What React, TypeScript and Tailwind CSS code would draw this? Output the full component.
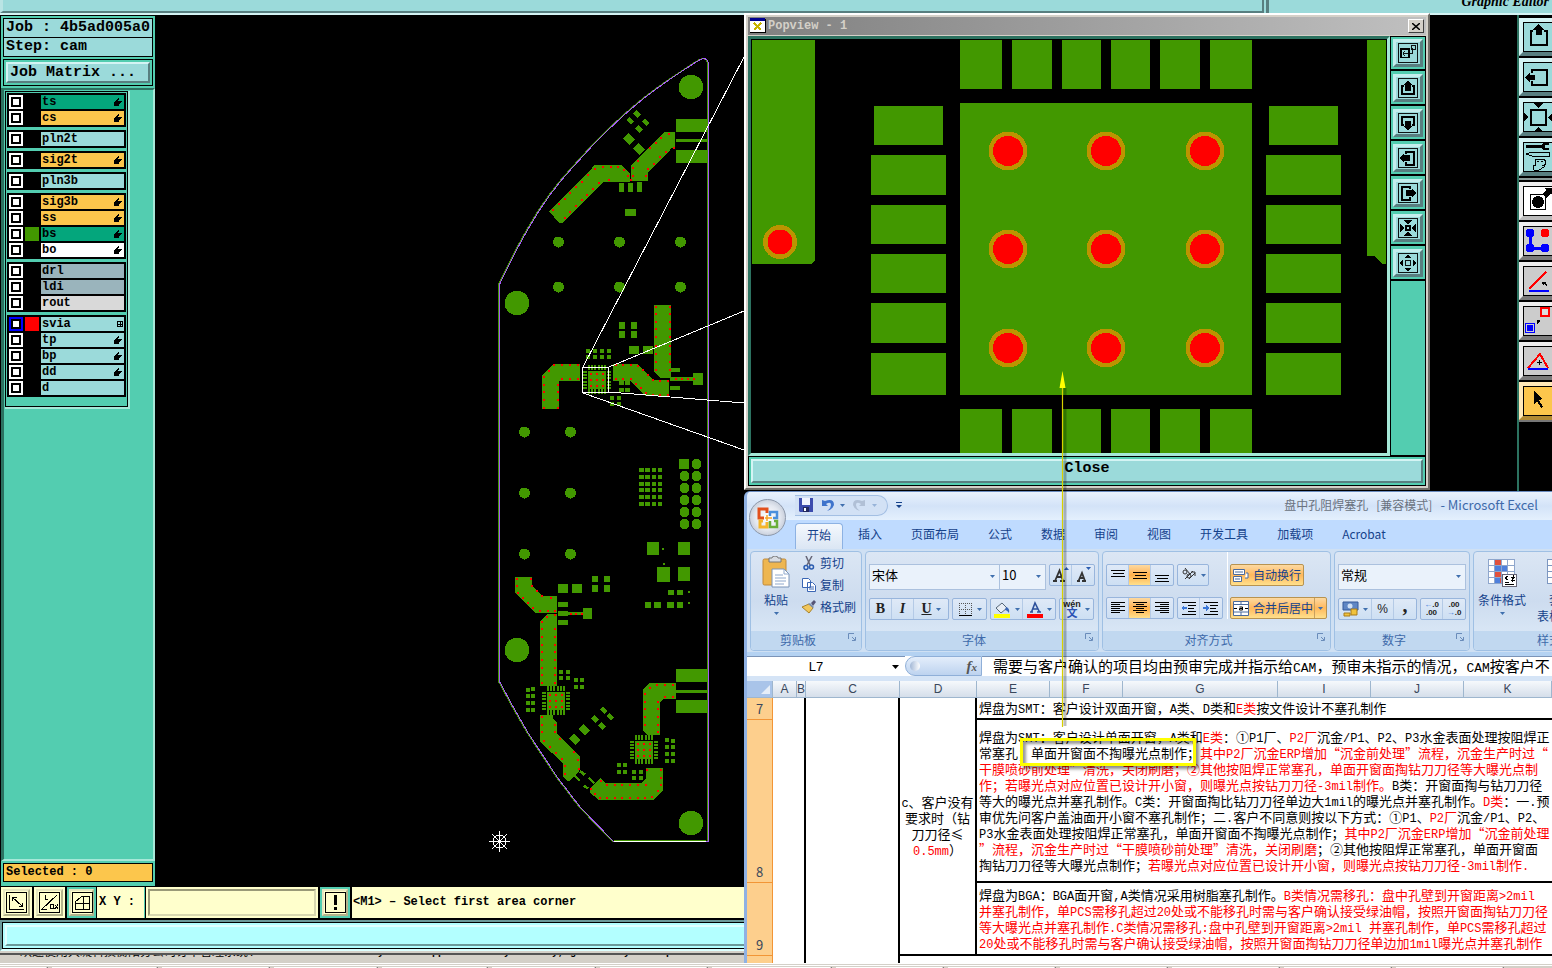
import React from 'react';

const GREEN = '#429800';
const RED = '#ff0000';

type Pt = [number, number];
type Box = [number, number, number, number];

/* ---------- shared text helpers ---------- */

/** Sets runs of Latin characters in a half-width face between the full-width ones. */
function Mixed({ text, latin }: { text: string; latin: string }) {
  return (
    <>
      {text.split(/([\x21-\x7e ]+)/).map((run, i) =>
        i % 2 ? (
          <span key={i} className={latin}>
            {run}
          </span>
        ) : (
          run
        ),
      )}
    </>
  );
}

/* ---------- layer list ---------- */

type Layer = { name: string; tone: string; swatch?: string; mark?: 'hand' | 'grid'; active?: boolean };

const AQUA = 'bg-[#9bdada]';
const AMBER = 'bg-[#fcc64c]';
const JADE = 'bg-[#04a67c]';
const SLATE = 'bg-[#9ab4bc]';

const layerGroups: Layer[][] = [
  [
    { name: 'ts', tone: JADE, mark: 'hand' },
    { name: 'cs', tone: AMBER, mark: 'hand' },
  ],
  [{ name: 'pln2t', tone: AQUA }],
  [{ name: 'sig2t', tone: AMBER, mark: 'hand' }],
  [{ name: 'pln3b', tone: AQUA }],
  [
    { name: 'sig3b', tone: AMBER, mark: 'hand' },
    { name: 'ss', tone: AMBER, mark: 'hand' },
    { name: 'bs', tone: JADE, mark: 'hand', swatch: 'bg-[#429800]' },
    { name: 'bo', tone: 'bg-white', mark: 'hand' },
  ],
  [
    { name: 'drl', tone: SLATE },
    { name: 'ldi', tone: SLATE },
    { name: 'rout', tone: 'bg-[#d9d9d9]' },
  ],
  [
    { name: 'svia', tone: AQUA, mark: 'grid', swatch: 'bg-[#ff0000]', active: true },
    { name: 'tp', tone: AQUA, mark: 'hand' },
    { name: 'bp', tone: AQUA, mark: 'hand' },
    { name: 'dd', tone: AQUA, mark: 'hand' },
    { name: 'd', tone: AQUA },
  ],
];

function LayerMark({ kind }: { kind: 'hand' | 'grid' }) {
  if (kind === 'grid')
    return (
      <svg width="8" height="8" viewBox="0 0 8 8" className="ml-auto" shapeRendering="crispEdges">
        <path d="M1.500 1.500h5v5h-5zM4 1v5M1 4h5" fill="none" stroke="#000" />
      </svg>
    );
  return (
    <svg width="8" height="8" viewBox="0 0 8 8" className="ml-auto mr-0.5" shapeRendering="crispEdges">
      <path d="M4 0h1v2H4v1h4v1H7v1H6v1H5v2H0V4h1V3h1V2h1V1h1z" />
    </svg>
  );
}

function Sidebar() {
  return (
    <aside className="ml-px flex w-[154px] shrink-0 flex-col border-t border-black bg-[#53cdb0] font-['Liberation_Mono',monospace] font-bold text-black">
      <div className="mx-0.5 mt-0.5 border border-black bg-[#9bdada] pl-0.5 text-[15px] leading-[18px] whitespace-nowrap">Job : 4b5ad005a0</div>
      <div className="mx-0.5 border border-t-0 border-black bg-[#9bdada] pl-0.5 text-[15px] leading-[18px]">Step: cam</div>
      <div className="mx-0.5 mt-0.5 border border-black p-0.5">
        <button className="block h-[21px] w-full border-2 border-t-[#d4f4f4] border-r-[#587f80] border-b-[#587f80] border-l-[#d4f4f4] bg-[#9bdada] pl-0.5 text-left text-[15px] leading-4">
          Job Matrix ...
        </button>
      </div>
      <div className="mt-0.5 flex-1 border-t-2 border-r-2 border-b-2 border-l-[3px] border-t-[#2c7260] border-r-[#a6e8d8] border-b-[#a6e8d8] border-l-[#2c7260]">
        <div className="mt-px mr-[23px] ml-px border-r-2 border-b-2 border-[#a6e8d8]">
          <div className="flex flex-col gap-[3px] border border-black p-px pb-[9px]">
            {layerGroups.map((group, i) => (
              <div key={i} className="flex flex-col gap-0.5 bg-black p-0.5">
                {group.map((l) => (
                  <label key={l.name} className="flex h-3.5 gap-0.5">
                    <input
                      type="checkbox"
                      className={
                        l.active
                          ? 'size-3.5 shrink-0 appearance-none border-2 border-[#0000ff] bg-white shadow-[inset_0_0_0_2px_#000]'
                          : 'size-3.5 shrink-0 appearance-none border-2 border-white bg-white shadow-[inset_0_0_0_2px_#000]'
                      }
                    />
                    <span className={`w-3.5 shrink-0 ${l.swatch ?? 'bg-black'}`} />
                    <span className={`flex min-w-0 flex-1 items-center pl-px text-xs leading-[14px] ${l.tone}`}>
                      {l.name}
                      {l.mark && <LayerMark kind={l.mark} />}
                    </span>
                  </label>
                ))}
              </div>
            ))}
          </div>
        </div>
      </div>
      <div className="mx-0.5 mt-0.5 mb-1 border border-black bg-[#fcc64c] pl-0.5 text-xs leading-[17px]">Selected : 0</div>
    </aside>
  );
}

/* ---------- board drawing ---------- */

const pts = (list: Pt[]) => list.map((p) => p.join(',')).join(' ');

/** One area of the board; coordinates are in thirds of a pixel from its origin. */
function Area({ x, y, polys, boxes, diamonds = [], vias }: { x: number; y: number; polys: Pt[][]; boxes: Box[]; diamonds?: [number, number, number][]; vias: Pt[] }) {
  return (
    <g transform={`translate(${x} ${y}) scale(0.33333)`} fill={GREEN}>
      {polys.map((p, i) => (
        <polygon key={i} points={pts(p)} />
      ))}
      {boxes.map(([bx, by, w, h], i) => (
        <rect key={i} x={bx} y={by} width={w} height={h} />
      ))}
      {diamonds.map(([cx, cy, r], i) => (
        <polygon key={i} points={pts([[cx - r, cy - 2], [cx - 2, cy - r], [cx + r, cy + 2], [cx + 2, cy + r]])} />
      ))}
      {vias.map(([vx, vy], i) => (
        <rect key={i} x={vx - 3} y={vy - 3} width="6" height="6" fill={RED} />
      ))}
    </g>
  );
}

const chip = (x: number, y: number): Box[] => [
  [x, y, 54, 54],
  ...[0, 9, 19, 29, 38, 48].flatMap((d): Box[] => [
    [x + d, y - 18, 6, 15],
    [x + d, y + 54, 6, 15],
    [x - 15, y + d, 12, 6],
    [x + 57, y + d, 12, 6],
  ]),
];
const chipVias = (x: number, y: number): Pt[] => [9, 27, 45].flatMap((dx) => [9, 27, 45].map((dy): Pt => [x + dx, y + dy]));
const bits = (list: Pt[], w = 12, h = 12): Box[] => list.map(([x, y]) => [x, y, w, h]);

const outline = 'M499 284C508 265 518 245 528 228C541 205 556 184 573 166C594 142 617 119 643 98C661 84 679 72 698 60Q706 55 708 63V841H613L580 807L557 777L528 733L513 707L499 681Z';

const dots: Pt[] = [
  [558, 242], [619, 242], [680, 242], [558, 287], [619, 287], [680, 287],
  [524, 432], [570, 432], [524, 493], [570, 493], [524, 554], [570, 554],
];

function Board() {
  return (
    <svg className="block h-full w-full" shapeRendering="crispEdges" role="img" aria-label="Board layout">
      <g transform="translate(-155 -15)">
        {[[691, 87], [517, 303], [517, 650], [691, 823]].map(([cx, cy]) => (
          <circle key={`${cx}-${cy}`} cx={cx} cy={cy} r="12.3" fill={GREEN} />
        ))}
        {dots.map(([cx, cy]) => (
          <circle key={`${cx}-${cy}`} cx={cx + 0.5} cy={cy} r="5.5" fill={GREEN} />
        ))}
        <Area
          x={480}
          y={40}
          polys={[
            [[207, 515], [345, 375], [425, 375], [450, 400], [450, 426], [370, 426], [248, 548], [238, 548]],
            [[453, 376], [553, 276], [585, 276], [585, 325], [575, 325], [504, 397], [504, 423], [453, 423]],
          ]}
          boxes={[[588, 237, 95, 39], [588, 297, 95, 9], [588, 330, 95, 39], [417, 429, 15, 27], [444, 429, 15, 27], [471, 426, 15, 30], [435, 507, 33, 21]]}
          diamonds={[[471, 222, 12], [451, 242, 11], [497, 248, 11], [477, 268, 12], [447, 297, 18], [477, 327, 18]]}
          vias={[
            [369, 381], [393, 381], [414, 381], [432, 391], [444, 408], [453, 420], [345, 387], [324, 405], [306, 426], [288, 441], [270, 459], [255, 477], [237, 492], [219, 510],
            [270, 516], [288, 498], [306, 480], [321, 465], [339, 447], [357, 429], [387, 420], [255, 534], [567, 282], [543, 294], [528, 309], [510, 324], [474, 363], [459, 384],
            [459, 408], [498, 408], [504, 387], [522, 372], [540, 351], [558, 336], [582, 323],
          ]}
        />
        <Area
          x={480}
          y={290}
          polys={[
            [[522, 45], [573, 45], [573, 263], [540, 263], [522, 245]],
            [[186, 258], [222, 222], [300, 222], [300, 272], [237, 272], [237, 357], [186, 357]],
            [[399, 222], [474, 222], [520, 270], [567, 270], [567, 318], [495, 318], [452, 272], [399, 272]],
          ]}
          boxes={[
            ...bits([[417, 96], [453, 96], [417, 123], [453, 123]], 18, 21),
            ...bits([[447, 168], [489, 168]], 30, 24),
            ...bits([[318, 177], [339, 177], [360, 177], [381, 177], [318, 195], [339, 195], [360, 195], [381, 195]]),
            ...bits([[417, 274], [435, 274], [417, 294], [435, 294]], 15, 12),
            ...bits([[390, 318], [411, 318], [390, 336], [411, 336]]),
            [570, 234, 30, 12], [570, 288, 30, 12], [570, 262, 75, 10], [639, 249, 30, 36],
            ...chip(324, 243),
            ...[477, 495, 516, 534].flatMap((x) => [534, 555, 576, 594, 615, 636].map((y): Box => [x, y, x < 500 ? 15 : 12, 12])),
            [597, 507, 30, 30], [501, 756, 36, 39], [594, 756, 36, 39], [546, 774, 6, 6], [549, 819, 6, 6],
          ]}
          vias={[
            ...chipVias(324, 243),
            ...[51, 72, 96, 117, 141, 168, 192, 216, 240].flatMap((y): Pt[] => [[528, y], [570, y]]),
            [246, 225], [270, 225], [294, 225], [222, 225], [207, 243], [192, 261], [192, 285], [192, 307], [192, 330], [192, 354], [234, 354], [234, 330], [234, 307], [234, 285], [246, 266], [270, 266], [294, 266],
            [408, 225], [429, 225], [453, 225], [474, 228], [489, 240], [504, 255], [519, 270], [541, 272], [564, 272], [408, 266], [429, 266], [453, 266], [468, 282], [483, 295], [498, 309], [519, 315], [541, 315], [564, 315],
            [588, 267], [606, 267], [624, 267], [642, 267],
          ]}
        />
        {[464, 476, 488, 500, 512, 524].map((y, i) => (
          <g key={y} fill={GREEN}>
            {i > 0 && <circle cx="684.5" cy={y} r="5" />}
            <circle cx="696.5" cy={y} r="5" />
          </g>
        ))}
        <Area
          x={480}
          y={560}
          polys={[
            [[105, 51], [156, 51], [156, 78], [189, 108], [231, 108], [231, 159], [165, 159], [105, 98]],
            [[180, 186], [204, 162], [231, 162], [231, 378], [180, 378]],
            [[180, 465], [218, 465], [218, 475], [231, 488], [231, 522], [300, 588], [300, 630], [268, 663], [262, 663], [249, 650], [249, 610], [180, 545]],
            [[330, 685], [362, 655], [378, 669], [486, 669], [498, 657], [498, 624], [549, 624], [549, 692], [522, 719], [354, 719], [330, 697]],
            [[489, 388], [510, 369], [588, 369], [588, 417], [550, 417], [540, 427], [540, 525], [501, 525], [489, 513]],
            [[285, 645], [303, 660], [297, 664], [281, 650]],
            [[328, 651], [346, 667], [340, 671], [324, 656]],
            [[300, 630], [318, 640], [312, 648], [298, 638]],
            [[314, 673], [328, 684], [320, 688], [309, 680]],
          ]}
          boxes={[
            [531, 21, 39, 45], [594, 21, 36, 42], [564, 90, 18, 15], [591, 90, 18, 15], [624, 93, 6, 6], [624, 126, 6, 6], [549, 9, 6, 6],
            [495, 126, 18, 18], [522, 126, 21, 18], [561, 126, 21, 18], [591, 126, 18, 18],
            ...bits([[234, 72], [276, 72]], 30, 27),
            ...bits([[336, 48], [372, 48], [336, 76], [372, 76]], 17, 19),
            ...bits([[234, 126], [234, 153], [234, 180]], 30, 15),
            [264, 156, 45, 9], [309, 144, 27, 33],
            [588, 327, 95, 39], [588, 390, 95, 9], [588, 420, 95, 39],
            ...chip(201, 396),
            ...chip(465, 543),
            ...bits([[237, 330], [258, 330], [237, 348], [258, 348], [282, 354], [300, 354], [282, 375], [300, 375]], 12, 11),
            ...bits([[138, 384], [153, 382], [138, 402], [153, 402], [138, 423], [153, 423], [138, 444], [153, 444]], 13, 11),
            ...bits([[555, 534], [573, 536], [555, 555], [573, 555], [555, 576], [573, 576], [555, 597], [573, 597]], 13, 12),
            ...bits([[411, 609], [429, 609], [411, 630], [429, 630], [456, 630], [477, 630], [456, 648], [477, 648]]),
          ]}
          diamonds={[[371, 452, 11], [391, 471, 11], [345, 477, 12], [366, 498, 12], [313, 510, 18], [284, 538, 18]]}
          vias={[
            ...chipVias(201, 396),
            ...chipVias(465, 543),
            [111, 57], [153, 57], [111, 78], [156, 78], [171, 93], [186, 108], [213, 114], [114, 99], [129, 114], [144, 129], [159, 144], [180, 153], [204, 153], [225, 153],
            [201, 171], [225, 165], [186, 186], [273, 162], [288, 162], [306, 162],
            ...[207, 231, 255, 276, 300, 324, 345, 369].flatMap((y): Pt[] => [[186, y], [225, y]]),
            [186, 471], [186, 495], [186, 516], [225, 495], [225, 516], [192, 543], [210, 561], [228, 579], [246, 597], [255, 618], [255, 642], [240, 537], [282, 576], [294, 600], [297, 627],
            [531, 375], [555, 375], [579, 375], [510, 384], [495, 402], [555, 411], [579, 411],
            ...[426, 447, 471, 495].flatMap((y): Pt[] => [[495, y], [534, y]]),
            [534, 516], [501, 630], [543, 630], [543, 654], [543, 675], [534, 693], [516, 711], [498, 674], [363, 663], [333, 687], [345, 701],
            ...[381, 405, 426, 450, 474].flatMap((x): Pt[] => [[x, 675], [x, 714]]),
            [360, 714], [495, 714],
          ]}
        />
        <path d={outline} fill="none" stroke={GREEN} transform="translate(-0.5 0.5)" />
        <path d={outline} fill="none" stroke="#a65cf5" transform="translate(0.5 0.5)" />
        <path d="M614 840.5H706" stroke={GREEN} />
        <path d="M614 841.5H706" stroke="#fff" />
        <g fill="none" stroke="#fff" strokeWidth="1">
          <rect x="582.5" y="367.5" width="26" height="25" />
          <path d="M583 367L744 57M609 367L744 311M609 392L744 403M583 393L744 450" />
        </g>
        <g fill="none" stroke="#fff">
          <circle cx="499.5" cy="841.5" r="6.5" />
          <path d="M489 841.5h21M499.5 831v21M492 834l15 15M507 834l-15 15" />
        </g>
      </g>
    </svg>
  );
}

/* ---------- tool icons ---------- */

type Glyph = 'up' | 'down' | 'left' | 'right' | 'in' | 'out' | 'zoomTo';

function PanGlyph({ kind }: { kind: Glyph }) {
  return (
    <svg viewBox="0 0 22 22" className="block h-full w-full" fill="none" stroke="#000" shapeRendering="crispEdges">
      <rect x="0.5" y="0.5" width="21" height="21" />
      {kind === 'up' && <path d="M7 9H4v9h14V9h-3" strokeWidth="2" />}
      {kind === 'up' && <path d="M11 3l5 5h-2v6H8V8H6z" fill="#000" stroke="none" />}
      {kind === 'down' && <path d="M7 13H4V4h14v9h-3" strokeWidth="2" />}
      {kind === 'down' && <path d="M11 19l5-5h-2V9H8v5H6z" fill="#000" stroke="none" />}
      {kind === 'left' && <path d="M9 7V4h9v15H9v-4" strokeWidth="2" />}
      {kind === 'left' && <path d="M2 11l5-5v2h6v6H7v2z" fill="#000" stroke="none" />}
      {kind === 'right' && <path d="M13 7V4H4v15h9v-4" strokeWidth="2" />}
      {kind === 'right' && <path d="M20 11l-5-5v2H9v6h6v2z" fill="#000" stroke="none" />}
      {kind === 'in' && (
        <>
          <rect x="8.5" y="8.5" width="5" height="5" strokeWidth="2" />
          <path d="M11 7L6 2h10zM11 15l-5 5h10zM7 11L2 6v10zM15 11l5-5v10z" fill="#000" stroke="none" />
        </>
      )}
      {kind === 'out' && (
        <>
          <rect x="8.5" y="8.5" width="5" height="5" />
          <path d="M11 1l4 5H7zM11 21l-4-5h8zM1 11l5-4v8zM21 11l-5-4v8z" fill="#000" stroke="none" />
        </>
      )}
      {kind === 'zoomTo' && (
        <>
          <rect x="3" y="7" width="9" height="9" strokeWidth="2" />
          <rect x="14.5" y="2.5" width="5" height="5" />
          <path d="M5 11.5h11V5M8 9l-3 2.5L8 14" />
        </>
      )}
    </svg>
  );
}

const popTools: [Glyph, string][] = [
  ['zoomTo', 'Zoom to area'], ['up', 'Pan up'], ['down', 'Pan down'], ['left', 'Pan left'], ['right', 'Pan right'], ['in', 'Zoom in'], ['out', 'Zoom out'],
];

type RailTool = { label: string; tone: string; draw: React.ReactNode };

const aquaKey = 'bg-[#9bdada] border-t-[#d4f4f4] border-l-[#d4f4f4] border-b-[#587f80]';
const greyKey = 'bg-[#cccccc] border-t-[#eeeeee] border-l-[#eeeeee] border-b-[#7a7a7a]';

const railTop: RailTool[] = [
  { label: 'Pan up', tone: aquaKey, draw: <><path d="M10 9H7.500v14h16V9H21" stroke="#000" strokeWidth="2" fill="none" /><path d="M15.500 2l6 6h-3v5h-6V8h-3z" /></> },
  { label: 'Pan left', tone: aquaKey, draw: <><path d="M9 11V7.500h15v15H9V19" stroke="#000" strokeWidth="2" fill="none" /><path d="M2 15l5-5v3h5v5H7v3z" /></> },
  { label: 'Zoom in', tone: aquaKey, draw: <><rect x="8" y="8" width="15" height="15" stroke="#000" strokeWidth="2" fill="none" /><path d="M15 6l-5-5h11zM15 25l-5 5h11zM5 15l-5-5v11zM25 15l5-5v11z" /></> },
  { label: 'Setup', tone: aquaKey, draw: <><path d="M3 3h15l3-2h5v2h-4v3h4v2h-5l-3-2H3z" /><path d="M3 12l6-2h17v4H9zM12 17h9l2 3-2 5-5 3h-5l-1-4 3-1zM14 19h2M18 19h2M19 23h2" stroke="#000" fill="none" /></> },
];

const railBottom: RailTool[] = [
  { label: 'Point', tone: 'bg-white border-t-[#eeeeee] border-l-[#eeeeee] border-b-[#bbbbbb]', draw: <><rect x="7.500" y="8.500" width="15" height="15" stroke="#000" fill="none" /><circle cx="15" cy="16" r="6" /><path d="M19 8l4-4-1-2h8v7l-2-1-5 4z" /></> },
  { label: 'Network', tone: greyKey, draw: <g fill="#00f" stroke="#00f" strokeWidth="3"><path d="M7 7v15h15" fill="none" /><circle cx="7" cy="7" r="3" /><circle cx="7" cy="22" r="3" /><circle cx="22" cy="22" r="3" /><circle cx="22" cy="7" r="3" fill={RED} stroke={RED} /></g> },
  { label: 'Angle', tone: greyKey, draw: <><path d="M6 23L23 6" stroke={RED} strokeWidth="2" /><path d="M6 25h20" stroke="#00f" strokeWidth="2.500" /><path d="M19 16h4l-1 1 2 2-1 1-2-2-1 1z" /></> },
  { label: 'Move', tone: greyKey, draw: <><rect x="2.500" y="17.500" width="9" height="9" fill="none" stroke="#00f" /><circle cx="7" cy="22" r="3.500" fill="#00f" /><rect x="17" y="1" width="10" height="10" fill={RED} /><circle cx="22" cy="6" r="3.500" fill="#ddd" /><path d="M14 14h3v3l-1-1-2 2z" /></> },
  { label: 'Triangle', tone: greyKey, draw: <><path d="M5 22L17 8l8 14" stroke={RED} strokeWidth="2" fill="none" /><path d="M5 23h20" stroke="#00f" strokeWidth="2.500" /><path d="M14 16.500h5M16.500 14v5" stroke="#000" /></> },
  { label: 'Select', tone: 'bg-[#fcc64c] border-t-[#ffe9b8] border-l-[#ffe9b8] border-b-[#b08a34]', draw: <path d="M11 5l8 8-3 1 4 7-2 1-4-7-3 3z" /> },
];

function RailKey({ tool }: { tool: RailTool }) {
  return (
    <button aria-label={tool.label} className={`h-[38px] w-[38px] shrink-0 border-4 border-r-0 ${tool.tone}`}>
      <svg width="32" height="30" viewBox="0 0 32 30" className="block max-w-none" shapeRendering="crispEdges">
        <rect x="0.5" y="0.5" width="31" height="29" fill="none" stroke="#000" />
        {tool.draw}
      </svg>
    </button>
  );
}

function Rail() {
  return (
    <aside className="flex w-[35px] shrink-0 flex-col overflow-hidden border-l-2 border-[#2c7260] pt-[3px]">
      <div className="flex flex-col gap-0.5">
        {railTop.map((t) => (
          <RailKey key={t.label} tool={t} />
        ))}
      </div>
      <div className="my-0.5 h-0.5 shrink-0 bg-[#8a9a98]" />
      <div className="flex flex-col gap-0.5 border-b-2 border-[#777]">
        {railBottom.map((t) => (
          <RailKey key={t.label} tool={t} />
        ))}
      </div>
    </aside>
  );
}

/* ---------- command bar ---------- */

function CommandBar() {
  const key = 'block size-full border-2 border-t-[#e6e6c0] border-l-[#e6e6c0] border-r-[#b4b48c] border-b-[#b4b48c] bg-[#ffffcc] p-px';
  const icon = 'mx-auto block size-[21px]';
  return (
    <div className="flex h-[34px] shrink-0 border-t border-black bg-black pb-0.5 pl-px font-['Liberation_Mono',monospace] text-xs font-bold text-black">
      <div className="mr-0.5 w-[31px] bg-[#ffffcc] p-0.5">
        <button aria-label="Area mode" className={key}>
          <svg viewBox="0 0 20 20" fill="none" stroke="#000" shapeRendering="crispEdges" className={icon}><path d="M.5.5h19v19H.5zM3.500 3v13.500H17M6 5l10 9M6 9V5h4M16 10v4h-4" /></svg>
        </button>
      </div>
      <div className="mr-0.5 w-[31px] bg-[#ffffcc] p-0.5">
        <button aria-label="Coordinate mode" className={key}>
          <svg viewBox="0 0 20 20" fill="none" stroke="#000" shapeRendering="crispEdges" className={icon}><path d="M.5.5h19v19H.5zM2 17L17 3M6.500 3v4h2M3 16.500h5M11 12h3v4h-3zM15 12l3 4M18 12l-3 4" /></svg>
        </button>
      </div>
      <div className="w-[29px] bg-[#53cdb0] p-0.5">
        <button aria-label="Grid" className={key}>
          <svg viewBox="0 0 20 20" fill="none" stroke="#000" shapeRendering="crispEdges" className={icon}><path d="M.5.5h19v19H.5zM3.500 16.500V9l6-5h7v12.500zM3 10.500h13M10.500 4v12" /></svg>
        </button>
      </div>
      <label htmlFor="xy" className="ml-px w-12 border-r border-[#53cdb0] bg-[#ffffcc] pl-0.5 leading-[31px] whitespace-pre">X Y :</label>
      <div className="ml-px w-[172px] bg-[#ffffcc] p-0.5">
        <input id="xy" className="block size-full border-2 border-t-[#9a9a78] border-r-[#d8d8b0] border-b-[#d8d8b0] border-l-[#9a9a78] bg-[#ffffcc] px-1 outline-none" defaultValue="" />
      </div>
      <div className="ml-0.5 w-[30px] bg-[#53cdb0] p-0.5">
        <button aria-label="Alerts" className={key}>
          <svg viewBox="0 0 20 20" fill="none" stroke="#000" shapeRendering="crispEdges" className={icon}><path d="M.5.5h19v19H.5z" /><path d="M10 3v9M10 14v3" strokeWidth="2" /></svg>
        </button>
      </div>
      <p className="ml-0.5 flex-1 bg-[#ffffcc] pl-px leading-[31px] whitespace-nowrap">&lt;M1&gt; – Select first area corner</p>
    </div>
  );
}

/* ---------- popview window ---------- */

const padCols: Pt[] = [[960, 42], [1012, 40], [1062, 39], [1111, 39], [1160, 40], [1210, 42]];
const padRows: Pt[] = [[155, 40], [205, 39], [254, 39], [303, 40], [353, 42]];

function Via({ x, y, r = 15 }: { x: number; y: number; r?: number }) {
  return (
    <>
      <circle cx={x} cy={y} r={r + 4.5} fill="#bc9400" />
      <circle cx={x} cy={y} r={r} fill={RED} />
    </>
  );
}

function Popview() {
  return (
    <section className="absolute top-[13px] left-[744px] flex h-[477px] w-[686px] flex-col border-2 border-t-white border-r-[#6f6c66] border-b-[#6f6c66] border-l-white bg-[#d4d0c8] p-0.5">
      <header className="flex h-[18px] shrink-0 items-center bg-linear-to-r from-[#808080] to-[#c0c0c0] pr-0.5 pl-0.5">
        <svg width="16" height="16" viewBox="0 0 16 16" shapeRendering="crispEdges">
          <path d="M0 0h15v14H0z" fill="#fff" />
          <path d="M0 0h15v3H0z" fill="#000090" />
          <path d="M4 5l7 7M11 5l-7 7" stroke="#c8b400" strokeWidth="2" />
          <path d="M0 14h16M15 1v14" stroke="#000" />
        </svg>
        <h2 className="ml-0.5 font-['Liberation_Mono',monospace] text-xs font-bold text-[#d4d0c8]">Popview - 1</h2>
        <button aria-label="Close window" className="ml-auto flex h-3.5 w-4 items-center justify-center border border-t-white border-r-[#404040] border-b-[#404040] border-l-white bg-[#d4d0c8]">
          <svg width="8" height="7" viewBox="0 0 8 7"><path d="M0 0l8 7M8 0L0 7" stroke="#000" strokeWidth="1.500" /></svg>
        </button>
      </header>
      <div className="mt-px flex min-h-0 flex-1 bg-[#53cdb0]">
        <div className="min-w-0 flex-1 border-3 border-t-[#2c7260] border-r-[#a6e8d8] border-b-[#a6e8d8] border-l-[#2c7260] bg-black">
          <svg className="block h-full w-full" fill={GREEN} shapeRendering="crispEdges" role="img" aria-label="Magnified pad">
            <g transform="translate(-751 -39)">
              <path d="M752 40h63v221l-4 3h-59zM1367 40h19v224h-4l-7-8h-8z" />
              {padCols.map(([x, w]) => (
                <g key={x}>
                  <rect x={x} y="40" width={w} height="49" />
                  <rect x={x} y="409" width={w} height="44" />
                </g>
              ))}
              <rect x="874" y="106" width="69" height="39" />
              <rect x="1269" y="106" width="69" height="39" />
              {padRows.map(([y, h]) => (
                <g key={y}>
                  <rect x="871" y={y} width="75" height={h} />
                  <rect x="1266" y={y} width="75" height={h} />
                </g>
              ))}
              <rect x="960" y="103" width="292" height="292" />
              {[1008, 1106, 1205].map((x) => [151, 249, 348].map((y) => <Via key={`${x}-${y}`} x={x} y={y} />))}
              <Via x={780} y={242} r={12.5} />
            </g>
          </svg>
        </div>
        <div className="flex w-9 shrink-0 flex-col gap-px border border-black">
          {popTools.map(([kind, label]) => (
            <div key={kind} className="h-[34px] border-b-2 border-black p-0.5">
              <button aria-label={label} className="block size-full border-3 border-t-[#c4eeee] border-r-[#587f80] border-b-[#587f80] border-l-[#c4eeee] bg-[#9bdada] p-px">
                <PanGlyph kind={kind} />
              </button>
            </div>
          ))}
        </div>
      </div>
      <div className="h-[30px] shrink-0 border border-black bg-[#53cdb0] p-0.5">
        <button className="block size-full border-2 border-t-[#d4f4f4] border-r-[#587f80] border-b-[#587f80] border-l-[#d4f4f4] bg-[#9bdada] pb-1 font-['Liberation_Mono',monospace] text-[15px] leading-4 font-bold text-black">
          Close
        </button>
      </div>
    </section>
  );
}

/* ---------- spreadsheet ribbon ---------- */

const tri = (
  <svg width="5" height="3" viewBox="0 0 5 3" className="shrink-0"><path d="M0 0h5L2.500 3z" fill="#3f6fae" /></svg>
);

function Cluster({ children }: { children: React.ReactNode }) {
  return <div className="flex h-[22px] divide-x divide-[#b4cae6] rounded-xs border border-[#98b5dc] bg-linear-to-b from-[#dfe9f7] to-[#cddff3]">{children}</div>;
}

function Key({ label, children, on, className = 'w-[22px]' }: { label: string; children: React.ReactNode; on?: boolean; className?: string }) {
  return (
    <button aria-label={label} className={`flex items-center justify-center gap-1 ${on ? 'bg-linear-to-b from-[#fcd9a0] via-[#ffb04a] to-[#ffe08c]' : ''} ${className}`}>
      {children}
    </button>
  );
}

function Lines({ rows }: { rows: [number, number, number][] }) {
  return (
    <svg width="14" height="16" viewBox="0 0 14 16" shapeRendering="crispEdges">
      {rows.map(([x, y, w]) => (
        <rect key={y} x={x} y={y} width={w} height="1" />
      ))}
    </svg>
  );
}

function Group({ title, className, launcher = true, children }: { title: string; className: string; launcher?: boolean; children: React.ReactNode }) {
  return (
    <section className={`flex shrink-0 flex-col rounded-sm border border-[#9fc0e4] bg-linear-to-b from-[#dbe6f4] via-[#cddcef] to-[#dfecf9] ${className}`}>
      <div className="min-h-0 flex-1 px-[3px]">{children}</div>
      <h3 className="relative h-[19px] shrink-0 rounded-b-sm bg-[#c1d8f0] pr-4 text-center text-xs leading-[17px] text-[#3e6aaa]">
        {title}
        {launcher && (
          <svg width="9" height="9" viewBox="0 0 9 9" className="absolute top-0.5 right-1" fill="none" stroke="#6a8cba"><path d="M.5 6V.5H6M4 4l3 3M7.500 4v3.500H4" /></svg>
        )}
      </h3>
    </section>
  );
}

function Picker({ label, value, className }: { label: string; value: string; className: string }) {
  return (
    <div className={`relative h-[26px] border border-[#abc1de] bg-[#eaf2fb] ${className}`}>
      <select aria-label={label} className="block h-5 w-full appearance-none pl-0.5 text-[13px] leading-5 text-black outline-none">
        <option>{value}</option>
      </select>
      <span className="pointer-events-none absolute top-2.5 right-1 flex">{tri}</span>
    </div>
  );
}

function SizeKey({ up }: { up?: boolean }) {
  return (
    <svg width="18" height="18" viewBox="0 0 18 18">
      <path d={up ? 'M1 15h4M8 15h5M3 15L7.500 4.500 11 15M5 11h5' : 'M3 15h3M8 15h4M4.500 15L8 7l3 8M6 12h4'} stroke="#333" strokeWidth="1.800" fill="none" />
      <path d={up ? 'M12 4h5l-2.500-3z' : 'M12 1h5l-2.500 3z'} fill="#2a5cb0" />
    </svg>
  );
}

const top3: [number, number, number][] = [[0, 3, 14], [2, 6, 11], [0, 9, 14]];
const mid3: [number, number, number][] = [[0, 5, 14], [2, 8, 11], [0, 11, 14]];
const bot3: [number, number, number][] = [[0, 8, 14], [2, 11, 11], [0, 14, 14]];
const para = (xs: Pt[]): [number, number, number][] => xs.map(([x, w], i) => [x, 2 + i * 2, w]);
const leftLines = para([[0, 14], [0, 9], [0, 14], [0, 9], [0, 14], [0, 9]]);
const centerLines = para([[0, 14], [3, 8], [0, 14], [3, 8], [0, 14], [3, 8]]);
const rightLines = para([[0, 14], [5, 9], [0, 14], [5, 9], [0, 14], [5, 9]]);

function Indent({ flip }: { flip?: boolean }) {
  return (
    <svg width="16" height="16" viewBox="0 0 16 16" shapeRendering="crispEdges">
      <path d="M1 2.500h14M7 5.500h8M7 8.500h6M7 11.500h8M1 14.500h14" stroke="#000" />
      <path d={flip ? 'M0 7h3V5l3 3-3 3V9H0z' : 'M6 7H3V5L0 8l3 3V9h3z'} fill="#3c78d8" />
    </svg>
  );
}

function Ribbon() {
  return (
    <div className="flex h-[107px] shrink-0 gap-[3px] overflow-hidden border-b-4 border-[#b4d2f2] bg-[#cfe0f3] pt-0.5 pr-0 pb-px pl-[3px] text-[#15428b]">
      <Group title="剪贴板" className="w-[112px]">
        <div className="flex h-full gap-1 pt-1 whitespace-nowrap">
          <button className="flex w-11 shrink-0 flex-col items-center text-xs leading-4">
            <svg width="28" height="32" viewBox="0 0 28 32">
              <rect x="1" y="3" width="23" height="26" rx="1.500" fill="#eeb650" stroke="#c08a3a" />
              <path d="M7 2h3a3 2 0 016 0h3v4H7z" fill="#d8dce2" stroke="#777" />
              <path d="M10 13h12l5 5v13H10z" fill="#fff" stroke="#7a94b8" />
              <path d="M22 13v5h5M13 19h8M13 22h11M13 25h11M13 28h9" stroke="#8fa8cc" fill="none" />
            </svg>
            <span className="mt-1">粘贴</span>
            <span className="mt-1">{tri}</span>
          </button>
          <div className="flex flex-col text-xs leading-[22px]">
            <button className="-mt-1 flex items-center gap-1">
              <svg width="14" height="15" viewBox="0 0 14 15" fill="none"><path d="M4 0l4 9M10 0L5 9" stroke="#667" strokeWidth="1.500" /><circle cx="4" cy="11.500" r="2" stroke="#2a5cb0" strokeWidth="1.500" /><circle cx="9.500" cy="11" r="2" stroke="#2a5cb0" strokeWidth="1.500" /></svg>
              剪切
            </button>
            <button className="flex items-center gap-1">
              <svg width="14" height="14" viewBox="0 0 14 14" fill="#fff" stroke="#3a66b4"><path d="M.5.500h6l2 2v7h-8zM5.500 4.500h5l3 3v6h-8zM7 9h5M7 11h5" /></svg>
              复制
            </button>
            <button className="flex items-center gap-1">
              <svg width="14" height="14" viewBox="0 0 14 14"><path d="M9 3l3-3 2 2-3 4z" fill="#557" /><path d="M0 7l7-3 4 4-4 5z" fill="#f2c75c" stroke="#a8832c" /><path d="M6 4l2-1 4 4-1 1z" fill="#7a8fb0" /></svg>
              格式刷
            </button>
          </div>
        </div>
      </Group>

      <Group title="字体" className="w-[234px]">
        <div className="flex pt-3">
          <Picker label="字体" value="宋体" className="w-[131px]" />
          <Picker label="字号" value="10" className="-ml-px w-[47px]" />
          <div className="ml-[3px]">
            <Cluster>
              <Key label="增大字号"><SizeKey up /></Key>
              <Key label="减小字号"><SizeKey /></Key>
            </Cluster>
          </div>
        </div>
        <div className="mt-2 flex gap-[3px] font-['Liberation_Serif',serif] text-sm font-bold text-[#222]">
          <Cluster>
            <Key label="加粗">B</Key>
            <Key label="倾斜"><i>I</i></Key>
            <Key label="下划线" className="w-[34px]"><u>U</u>{tri}</Key>
          </Cluster>
          <Cluster>
            <Key label="边框" className="w-[33px]">
              <svg width="15" height="15" viewBox="0 0 15 15" shapeRendering="crispEdges"><path d="M1.500 1v12M7.500 1v12M13.500 1v12M1 1.500h12M1 7.500h12" stroke="#555" strokeDasharray="1 1" /><path d="M1 13.500h13" stroke="#000" /></svg>
              {tri}
            </Key>
          </Cluster>
          <Cluster>
            <Key label="填充颜色" className="w-8">
              <svg width="17" height="17" viewBox="0 0 17 17"><path d="M2 7l6-5 5 5-6 5z" fill="#e8eef6" stroke="#567" /><path d="M12 6q4 1 3 6-2-3-4-3z" fill="#3a66b4" /><path d="M0 13h16v4H0z" fill="#ff0" /></svg>
              {tri}
            </Key>
            <Key label="字体颜色" className="w-8">
              <svg width="16" height="17" viewBox="0 0 16 17"><path d="M3 11h3M10 11h4M4.500 11L8 2l4.500 9M6 8h5" stroke="#2d519c" strokeWidth="1.600" fill="none" /><path d="M0 13h16v4H0z" fill="#f00" /></svg>
              {tri}
            </Key>
          </Cluster>
          <Cluster>
            <Key label="拼音" className="w-[33px]">
              <span className="flex flex-col items-center font-['Liberation_Sans','Noto_Sans_CJK_SC',sans-serif] text-[9px] leading-[8px]">wén<span className="text-[11px] leading-[11px] text-[#2a52b4]">文</span></span>
              {tri}
            </Key>
          </Cluster>
        </div>
      </Group>

      <Group title="对齐方式" className="w-[229px]">
        <div className="flex">
          <div className="flex flex-col gap-[11px] border-r border-white pt-3 pr-1">
            <div className="flex gap-[3px]">
              <Cluster>
                <Key label="顶端对齐"><Lines rows={top3} /></Key>
                <Key label="垂直居中" on><Lines rows={mid3} /></Key>
                <Key label="底端对齐"><Lines rows={bot3} /></Key>
              </Cluster>
              <Cluster>
                <Key label="方向" className="w-[30px]">
                  <svg width="16" height="16" viewBox="0 0 16 16" fill="none" stroke="#333"><circle cx="4" cy="5" r="2" /><path d="M4 1l5 6M8 12L14 6M14 9V5h-4M4 12l8-8" /><circle cx="8" cy="9" r="2" /></svg>
                  {tri}
                </Key>
              </Cluster>
            </div>
            <div className="flex gap-[3px]">
              <Cluster>
                <Key label="文本左对齐"><Lines rows={leftLines} /></Key>
                <Key label="居中" on><Lines rows={centerLines} /></Key>
                <Key label="文本右对齐"><Lines rows={rightLines} /></Key>
              </Cluster>
              <Cluster>
                <Key label="减少缩进量"><Indent /></Key>
                <Key label="增加缩进量"><Indent flip /></Key>
              </Cluster>
            </div>
          </div>
          <div className="ml-0.5 flex flex-col items-start gap-[11px] pt-3 text-xs whitespace-nowrap">
            <button className="flex h-[22px] items-center gap-1 rounded-xs border border-[#b89350] bg-linear-to-b from-[#fcd9a0] via-[#ffb85c] to-[#ffe08c] pr-0.5 pl-px">
              <svg width="17" height="15" viewBox="0 0 17 15" fill="#fff" stroke="#4b6a9c"><path d="M1.500 1.500h11v5h-11zM1.500 8.500h8v5h-8zM3 4h8M3 11h5M14 5h2v5h-3" /></svg>
              自动换行
            </button>
            <div className="flex h-[22px] rounded-xs border border-[#b89350] bg-linear-to-b from-[#fcd9a0] via-[#ffb85c] to-[#ffe08c]">
              <button className="flex items-center gap-1 border-r border-[#c8a060] pr-px pl-0.5">
                <svg width="16" height="15" viewBox="0 0 16 15" fill="#fff" stroke="#4b6a9c"><path d="M.5.500h15v14H.5zM8 .500v3M8 11v3.500M.5 3.500h15M.5 11h15" /><path d="M1 7.500h3M15 7.500h-3M6.500 6h3v3h-3V7.500h3" stroke="#000" fill="none" /></svg>
                合并后居中
              </button>
              <button aria-label="合并选项" className="flex w-[11px] items-center justify-center">{tri}</button>
            </div>
          </div>
        </div>
      </Group>

      <Group title="数字" className="w-[136px]">
        <div className="pt-3">
          <Picker label="数字格式" value="常规" className="w-32" />
        </div>
        <div className="mt-2 flex gap-[3px] text-xs font-bold text-[#222]">
          <Cluster>
            <Key label="会计数字格式" className="w-[33px]">
              <svg width="17" height="16" viewBox="0 0 17 16"><path d="M1 1h15v8H1z" fill="#5f86c4" stroke="#35599a" /><circle cx="8" cy="5" r="2.500" fill="#cfe0f5" /><path d="M9 8h6v6H9z" fill="#f0c23c" stroke="#a87b18" /><path d="M2 12h6v3H2z" fill="#f0c23c" stroke="#a87b18" /></svg>
              {tri}
            </Key>
            <Key label="百分比样式"><span className="font-['Liberation_Sans',sans-serif] font-normal">%</span></Key>
            <Key label="千位分隔样式"><span className="-mt-2 font-['Liberation_Serif',serif] text-xl leading-4">,</span></Key>
          </Cluster>
          <Cluster>
            <Key label="增加小数位数"><span className="font-['Liberation_Sans',sans-serif] text-[8px] leading-[8px]"><span className="text-[#3c78d8]">←</span>.0<br />.00</span></Key>
            <Key label="减少小数位数"><span className="font-['Liberation_Sans',sans-serif] text-[8px] leading-[8px]">.00<br /><span className="text-[#3c78d8]">→</span>.0</span></Key>
          </Cluster>
        </div>
      </Group>

      <Group title="样式" className="w-[168px]" launcher={false}>
        <div className="flex gap-[5px] pt-1.5 text-xs leading-4 whitespace-nowrap">
          <button className="flex w-[50px] flex-col items-center">
            <svg width="30" height="30" viewBox="0 0 30 30" shapeRendering="crispEdges">
              <path d="M1 1h26v24H1z" fill="#fff" />
              <path d="M7 1h7v24H7z" fill="#e2513c" />
              <path d="M7 7h13v6H7zM7 19h6v6H7z" fill="#4f80dc" />
              <path d="M1.500 1v24M7.500 1v24M14.500 1v24M20.500 1v24M27.500 1v24M1 1.500h26M1 7.500h26M1 13.500h26M1 19.500h26M1 25.500h26" stroke="#8ea6cc" />
              <path d="M15.500 16.500h14v12h-14z" fill="#fff" stroke="#667" />
              <path d="M21 18l-3 2 3 2M18 24h4M24 19h4M24 22h4M27 17l-2 7M18 27l9-1" stroke="#000" fill="none" />
            </svg>
            <span className="mt-1">条件格式</span>
            <span className="mt-1">{tri}</span>
          </button>
          <button className="flex w-[58px] flex-col items-center">
            <svg width="30" height="30" viewBox="0 0 30 30" shapeRendering="crispEdges">
              <path d="M1.500 1.500h27v24h-27zM1 7.500h27M1 13.500h27M1 19.500h27M10.500 1v24M19.500 1v24" fill="#fff" stroke="#7d97c0" />
            </svg>
            <span className="mt-1">套用</span>
            <span>表格格式</span>
          </button>
        </div>
      </Group>
    </div>
  );
}

function TitleArea() {
  return (
    <header className="relative flex h-7 shrink-0 items-center bg-linear-to-b from-[#e9f2fd] via-[#d3e3f8] to-[#e4f0fd] pb-0.5 pl-12 text-[#15428b]">
      <button aria-label="Office 按钮" className="absolute top-[7px] left-0.5 z-10 flex size-[37px] items-center justify-center rounded-full border border-[#8d98aa] bg-radial from-white via-[#e4e8f0] to-[#a9b3c4]">
        <svg width="24" height="24" viewBox="0 0 24 24" fill="none" strokeWidth="3">
          <path d="M11 7V3H3v9h5" stroke="#e2501c" />
          <path d="M14 10V6h7v6h-4" stroke="#4a8fdc" strokeWidth="2.500" />
          <path d="M11 16v5H4v-6h3" stroke="#f5b52a" />
          <path d="M14 15v6h7v-6h-3" stroke="#6aaf3a" strokeWidth="2.500" />
          <path d="M11 9v6M9 12h7" stroke="#f5a52a" strokeWidth="1.500" />
        </svg>
      </button>
      <div className="flex h-[21px] items-center gap-2 rounded-r-full border border-l-0 border-[#a3bfe3] bg-[#d2e1f5] pr-2.5">
        <button aria-label="保存">
          <svg width="14" height="14" viewBox="0 0 14 14" className="ml-1"><path d="M0 0h14v14H1l-1-1z" fill="#3c4cae" /><path d="M3 0h8v7H3z" fill="#f0f4ff" /><path d="M4 9h6v5H4z" fill="#222a60" /><path d="M5 10h2v3H5z" fill="#fff" /></svg>
        </button>
        <button aria-label="撤消" className="flex items-center gap-1.5"><svg width="13" height="13" viewBox="0 0 13 13"><path d="M1 1v6h6L5 5q5-3 5 1 0 3-4 6 6-2 7-6 0-7-9-4z" fill="#3f74cc" /></svg>{tri}</button>
        <button aria-label="恢复" className="flex items-center gap-1.5 opacity-40"><svg width="13" height="13" viewBox="0 0 13 13"><path d="M12 1v6H6l2-2Q3 2 3 6q0 3 4 6-6-2-7-6 0-7 9-4z" fill="#7f8fa8" /></svg>{tri}</button>
      </div>
      <button aria-label="自定义快速访问工具栏" className="ml-2"><svg width="6" height="8" viewBox="0 0 6 8"><path d="M0 1h6v1H0zM0 4h6L3 7z" fill="#15428b" /></svg></button>
      <p className="ml-auto flex items-center gap-2 pr-3.5 text-xs text-[#6a7280]">
        <span>盘中孔阻焊塞孔</span>
        <span>[兼容模式]</span>
        <span className="text-[13px] text-[#3e6aaa]">- Microsoft Excel</span>
      </p>
    </header>
  );
}

const tabs = ['插入', '页面布局', '公式', '数据', '审阅', '视图', '开发工具', '加载项', 'Acrobat'];

/* ---------- sheet ---------- */

type Run = [string, boolean?];

const row8: Run[][] = [
  [['焊盘为SMT：客户设计单面开窗，A类和'], ['E类', true], ['：①P1厂、'], ['P2厂', true], ['沉金/P1、P2、P3水金表面处理按阻焊正']],
  [['常塞孔；单面开窗面不掏曝光点制作；'], ['其中P2厂沉金ERP增加“沉金前处理”流程，沉金生产时过“', true]],
  [['干膜喷砂前处理”清洗，关闭刷磨；②其他按阻焊正常塞孔，单面开窗面掏钻刀刀径等大曝光点制', true]],
  [['作；若曝光点对应位置已设计开小窗，则曝光点按钻刀刀径-3mil制作。', true], ['B类：开窗面掏与钻刀刀径']],
  [['等大的曝光点并塞孔制作。C类：开窗面掏比钻刀刀径单边大1mil的曝光点并塞孔制作。'], ['D类', true], ['：一.预']],
  [['审优先问客户盖油面开小窗不塞孔制作；二.客户不同意则按以下方式：①P1、'], ['P2厂', true], ['沉金/P1、P2、']],
  [['P3水金表面处理按阻焊正常塞孔，单面开窗面不掏曝光点制作；'], ['其中P2厂沉金ERP增加“沉金前处理', true]],
  [['”流程，沉金生产时过“干膜喷砂前处理”清洗，关闭刷磨', true], ['；②其他按阻焊正常塞孔，单面开窗面']],
  [['掏钻刀刀径等大曝光点制作；'], ['若曝光点对应位置已设计开小窗，则曝光点按钻刀刀径-3mil制作.', true]],
];

const row9: Run[][] = [
  [['焊盘为BGA：BGA面开窗,A类情况采用树脂塞孔制作。'], ['B类情况需移孔：盘中孔壁到开窗距离>2mil', true]],
  [['并塞孔制作，单PCS需移孔超过20处或不能移孔时需与客户确认接受绿油帽，按照开窗面掏钻刀刀径', true]],
  [['等大曝光点并塞孔制作.C类情况需移孔:盘中孔壁到开窗距离>2mil 并塞孔制作，单PCS需移孔超过', true]],
  [['20处或不能移孔时需与客户确认接受绿油帽，按照开窗面掏钻刀刀径单边加1mil曝光点并塞孔制作', true]],
];

const row7: Run[][] = [[['焊盘为SMT：客户设计双面开窗，A类、D类和'], ['E类', true], ['按文件设计不塞孔制作']]];
const rowD: Run[][] = [[['c、客户没有']], [['要求时（钻']], [['刀刀径≤']], [['0.5mm', true], ['）']]];

function CellText({ lines }: { lines: Run[][] }) {
  return (
    <>
      {lines.map((line, i) => (
        <div key={i} className="h-4 leading-4 whitespace-pre">
          {line.map(([text, red], j) => (
            <span key={j} className={red ? 'text-[#ff0000]' : ''}>
              <Mixed text={text} latin="font-['Liberation_Mono',monospace] text-xs leading-none" />
            </span>
          ))}
        </div>
      ))}
    </>
  );
}

const rowHead = 'border-r border-b border-[#f29536] bg-[#fdcf8d] p-0 pb-0.5 align-bottom text-[13px] leading-4 font-normal text-[#39475c]';
const cols = ['A', 'B', 'C', 'D', 'E', 'F', 'G', 'I', 'J', 'K'];

function Sheet() {
  return (
    <div className="min-h-0 flex-1 overflow-hidden bg-white">
      <table className="w-full table-fixed border-separate border-spacing-0 font-['Noto_Sans_CJK_SC',sans-serif] text-[13px] text-black">
        <colgroup>
          <col className="w-[26px]" />
          <col className="w-6" />
          <col className="w-[9px]" />
          <col className="w-[94px]" />
          <col className="w-[77px]" />
          <col className="w-[73px]" />
          <col className="w-[73px]" />
          <col className="w-[155px]" />
          <col className="w-[93px]" />
          <col className="w-[93px]" />
          <col />
        </colgroup>
        <thead>
          <tr className="h-[17px]">
            <th className="border-r border-b border-[#9eb6ce] bg-[#a9c4e9] p-0">
              <svg width="12" height="11" viewBox="0 0 12 11" className="ml-auto"><path d="M10 1v9H1z" fill="#e6eef8" /></svg>
            </th>
            {cols.map((c) => (
              <th key={c} className="overflow-hidden border-r border-b border-[#9eb6ce] bg-linear-to-b from-[#f6f9fc] to-[#d5deea] p-0 font-['Liberation_Sans',sans-serif] text-xs leading-4 font-normal text-[#39475c]">
                {c}
              </th>
            ))}
          </tr>
        </thead>
        <tbody>
          <tr className="h-[22px]">
            <th className={rowHead}>7</th>
            <td rowSpan={4} />
            <td rowSpan={4} className="border-r-2 border-black" />
            <td rowSpan={4} className="border-r-2 border-black" />
            <td rowSpan={3} className="border-r-2 border-b-2 border-black p-0 text-center"><CellText lines={rowD} /></td>
            <td colSpan={6} className="border-b-2 border-black p-0 pl-0.5"><CellText lines={row7} /></td>
          </tr>
          <tr className="h-[163px]">
            <th className={rowHead}>8</th>
            <td colSpan={6} className="overflow-hidden border-b-2 border-black p-0 pl-0.5"><CellText lines={row8} /></td>
          </tr>
          <tr className="h-[73px]">
            <th className={rowHead}>9</th>
            <td colSpan={6} className="overflow-hidden border-b-2 border-black p-0 pl-0.5"><CellText lines={row9} /></td>
          </tr>
          <tr className="h-4">
            <th className={rowHead} />
            <td colSpan={7} />
          </tr>
        </tbody>
      </table>
    </div>
  );
}

function Spreadsheet() {
  return (
    <section className="absolute top-[491px] right-0 bottom-[5px] left-[744px] flex flex-col overflow-hidden rounded-tl-md border-t border-l-3 border-t-[#6a8cc0] border-l-[#8fb1e3] bg-[#bfdbff] font-['Noto_Sans_CJK_SC',sans-serif]">
      <TitleArea />
      <nav className="flex h-[29px] shrink-0 items-end gap-px bg-[#bfdbff] pl-12 text-xs text-[#15428b]">
        <button className="h-[26px] rounded-t-sm border border-b-0 border-[#8db2e3] bg-linear-to-b from-[#f4f8fd] to-[#dbe6f4] px-[11px] pb-1">开始</button>
        {tabs.map((t) => (
          <button key={t} className="h-[26px] px-3.5 pb-1 first-of-type:ml-0">
            {t}
          </button>
        ))}
      </nav>
      <Ribbon />
      <div className="flex h-[25px] shrink-0 border-b-[5px] border-[#d5e4f6] bg-white">
        <div className="relative w-[158px] border-t border-[#7b94b8]">
          <input aria-label="名称框" defaultValue="L7" className="block h-[18px] w-[138px] text-center font-['Liberation_Sans',sans-serif] text-[13px] leading-4 text-black outline-none" />
          <svg width="7" height="4" viewBox="0 0 7 4" className="absolute top-2 right-1.5"><path d="M0 0h7L3.500 4z" /></svg>
        </div>
        <div className="flex w-[77px] items-center justify-between rounded-l-full border border-[#8fafd8] bg-linear-to-b from-[#e4eefb] to-[#bdd3ef] pr-1">
          <span className="ml-1 size-2.5 rounded-full bg-linear-to-r from-[#a3b8d6] to-white" />
          <button aria-label="插入函数" className="font-['Liberation_Serif',serif] text-[15px] leading-4 font-bold text-[#555] italic">f<span className="text-[11px]">x</span></button>
        </div>
        <p className="min-w-0 flex-1 overflow-hidden border-t border-[#7b94b8] pl-[11px] text-[15px] leading-[18px] whitespace-nowrap text-black">
          <Mixed text="需要与客户确认的项目均由预审完成并指示给CAM，预审未指示的情况，CAM按客户不" latin="font-['Liberation_Mono',monospace] text-[13px] leading-none" />
        </p>
      </div>
      <Sheet />
    </section>
  );
}

/* ---------- page ---------- */

export default function App() {
  return (
    <main className="relative flex h-screen flex-col overflow-hidden bg-black">
      <header className="flex h-[15px] shrink-0 border-b-2 border-[#d4f4f4] bg-[#9bdada]">
        <div className="w-[1264px] border-r-2 border-b-2 border-l-3 border-r-[#587f80] border-b-[#587f80] border-l-[#b9e4e4]" />
        <div className="ml-0.5 flex min-w-0 flex-1 justify-end border-l-3 border-[#587f80] pr-[3px]">
          <h1 className="-mt-2 font-['Liberation_Serif',serif] text-sm leading-5 font-bold text-black italic">Graphic Editor</h1>
        </div>
      </header>
      <div className="flex min-h-0 flex-1">
        <Sidebar />
        <div className="min-w-0 flex-1">
          <Board />
        </div>
        <Rail />
      </div>
      <CommandBar />
      <div className="h-[31px] shrink-0 border-t-2 border-b-2 border-l-2 border-t-[#6b9a9a] border-b-[#dff] border-l-[#6b9a9a]">
        <div className="h-full border border-black bg-[#b3ffff] p-0.5">
          <div className="h-full border-2 border-t-[#e0ffff] border-r-0 border-b-[#6b9a9a] border-l-[#e0ffff]" />
        </div>
      </div>
      <footer className="flex h-[17px] shrink-0 flex-col bg-[#d4d0c8] pt-0.5 font-['Liberation_Mono','Noto_Sans_CJK_SC',monospace] text-xs text-black">
        <div className="h-1.5 shrink-0 border-t-2 border-[#555]">
          <div className="flex h-1 w-[744px] items-end overflow-hidden pl-5 leading-3 font-bold whitespace-nowrap">
            <span className="w-[298px] font-normal">欢迎使用大凝科技衡阳分公司订单管理系统!</span>
            <span className="text-[10px]">Don't let your disappointed is yesterday, gave all your hopes to tomor</span>
          </div>
        </div>
        <div className="mt-1 flex h-[3px] shrink-0 border-y border-white" />
        <div className="mt-px flex flex-1 gap-1">
          {[48, 106, 108, 104, 106, 104, 108, 120, 108, 108, 108, 108, 108, 108].map((w, i) => (
            <span key={i} className="border-t border-r-2 border-l border-t-white border-r-[#555] border-l-white" style={{ width: w }} />
          ))}
        </div>
      </footer>

      <Popview />
      <Spreadsheet />

      <svg width="16" height="360" viewBox="0 0 16 360" className="pointer-events-none absolute top-[370px] left-[1055px]" aria-hidden="true">
        <path d="M10 18v338" stroke="#000" strokeOpacity="0.25" strokeWidth="3" />
        <path d="M7.500 14v343" stroke="#d8d000" strokeWidth="1.200" />
        <path d="M7.500 1l3 17h-6z" fill="#ff0" />
      </svg>
      <div className="pointer-events-none absolute top-[738px] left-[1020px] h-[28px] w-[176px] border-3 border-[#ffff00] shadow-[3px_3px_3px_rgba(0,0,0,0.45),inset_3px_3px_3px_rgba(0,0,0,0.4)]" />
    </main>
  );
}
